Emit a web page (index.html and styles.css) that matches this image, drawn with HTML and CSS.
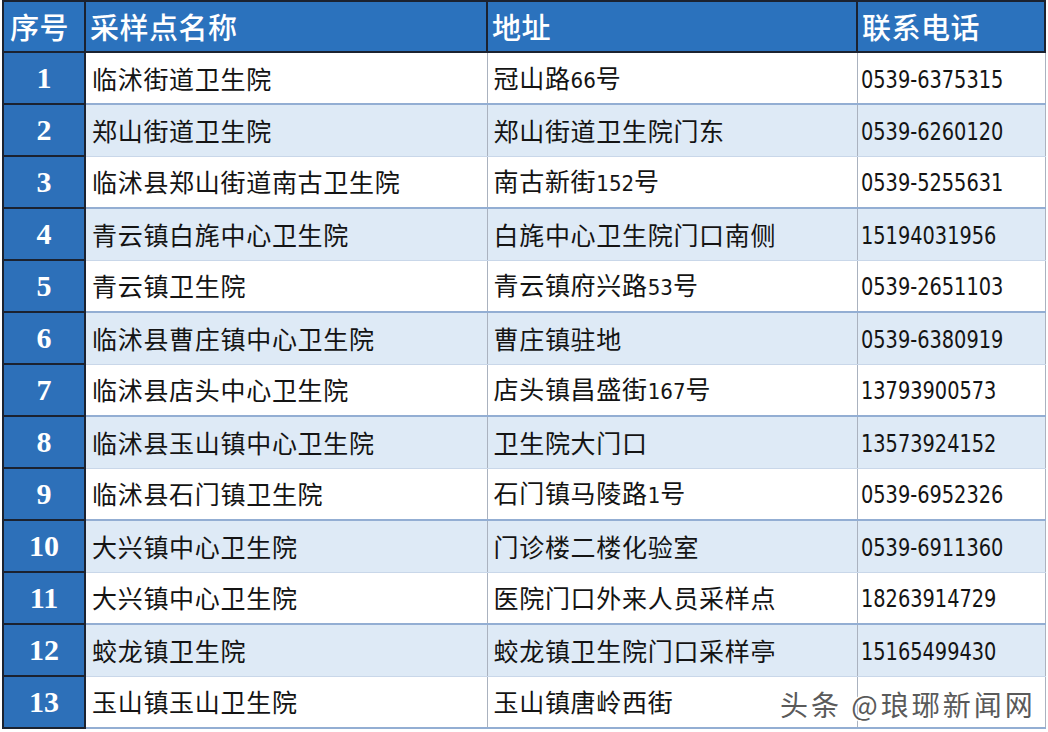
FILE: index.html
```html
<!DOCTYPE html>
<html lang="zh-CN">
<head>
<meta charset="utf-8">
<title>采样点</title>
<link rel="stylesheet" href="styles.css">
</head>
<body>
<div class="page">
<table class="sheet">
  <colgroup>
    <col class="c-no"><col class="c-name"><col class="c-addr"><col class="c-tel">
  </colgroup>
  <thead>
    <tr><th class="no">序号</th><th>采样点名称</th><th>地址</th><th>联系电话</th></tr>
  </thead>
  <tbody>
    <tr class="odd"><td class="no">1</td><td>临沭街道卫生院</td><td>冠山路<span class="num">66</span>号</td><td class="tel"><span class="digits">0539-6375315</span></td></tr>
    <tr class="even"><td class="no">2</td><td>郑山街道卫生院</td><td>郑山街道卫生院门东</td><td class="tel"><span class="digits">0539-6260120</span></td></tr>
    <tr class="odd"><td class="no">3</td><td>临沭县郑山街道南古卫生院</td><td>南古新街<span class="num">152</span>号</td><td class="tel"><span class="digits">0539-5255631</span></td></tr>
    <tr class="even"><td class="no">4</td><td>青云镇白旄中心卫生院</td><td>白旄中心卫生院门口南侧</td><td class="tel"><span class="digits">15194031956</span></td></tr>
    <tr class="odd"><td class="no">5</td><td>青云镇卫生院</td><td>青云镇府兴路<span class="num">53</span>号</td><td class="tel"><span class="digits">0539-2651103</span></td></tr>
    <tr class="even"><td class="no">6</td><td>临沭县曹庄镇中心卫生院</td><td>曹庄镇驻地</td><td class="tel"><span class="digits">0539-6380919</span></td></tr>
    <tr class="odd"><td class="no">7</td><td>临沭县店头中心卫生院</td><td>店头镇昌盛街<span class="num">167</span>号</td><td class="tel"><span class="digits">13793900573</span></td></tr>
    <tr class="even"><td class="no">8</td><td>临沭县玉山镇中心卫生院</td><td>卫生院大门口</td><td class="tel"><span class="digits">13573924152</span></td></tr>
    <tr class="odd"><td class="no">9</td><td>临沭县石门镇卫生院</td><td>石门镇马陵路<span class="num">1</span>号</td><td class="tel"><span class="digits">0539-6952326</span></td></tr>
    <tr class="even"><td class="no">10</td><td>大兴镇中心卫生院</td><td>门诊楼二楼化验室</td><td class="tel"><span class="digits">0539-6911360</span></td></tr>
    <tr class="odd"><td class="no">11</td><td>大兴镇中心卫生院</td><td>医院门口外来人员采样点</td><td class="tel"><span class="digits">18263914729</span></td></tr>
    <tr class="even"><td class="no">12</td><td>蛟龙镇卫生院</td><td>蛟龙镇卫生院门口采样亭</td><td class="tel"><span class="digits">15165499430</span></td></tr>
    <tr class="odd"><td class="no">13</td><td>玉山镇玉山卫生院</td><td>玉山镇唐岭西街</td><td class="tel">&nbsp;</td></tr>
  </tbody>
</table>
<div class="watermark">头条 @琅琊新闻网</div>
</div>
</body>
</html>
```

FILE: styles.css
```css
html, body {
  margin: 0;
  padding: 0;
  background: #ffffff;
}
.page {
  position: relative;
  width: 1048px;
  height: 732px;
  overflow: hidden;
  font-family: "Noto Sans CJK SC", "Noto Sans", sans-serif;
}
.sheet {
  border-collapse: collapse;
  table-layout: fixed;
  width: 1042px;
  margin-left: 2px;
}
.c-no { width: 82px; }
.c-name { width: 402px; }
.c-addr { width: 370px; }
.c-tel { width: 188px; }

.sheet th {
  height: 49px;
  padding: 0 0 0 4px;
  background: #2b72bd;
  color: #ffffff;
  font-size: 29px;
  font-weight: 500;
  text-align: left;
  border: 2px solid #1b2230;
  letter-spacing: 0.5px;
  line-height: 1;
}
.sheet th.no {
  padding: 0 0 0 6px;
}
.sheet td {
  height: 50px;
  padding: 0 0 0 6px;
  font-size: 25px;
  letter-spacing: 0.7px;
  color: #141414;
  line-height: 1;
  border-left: 1px solid #aab2bf;
  border-right: 1px solid #aab2bf;
  white-space: nowrap;
}
.sheet tr.odd td { background: #ffffff; border-bottom: 2px solid #93aed3; }
.sheet tr.even td { background: #deeaf6; border-bottom: 1px solid #c9d7e9; }

.sheet td.no {
  background: #2d70b9 !important;
  color: #ffffff;
  font-family: "Liberation Serif", serif;
  font-weight: 700;
  font-size: 30px;
  text-align: center;
  padding: 0;
  letter-spacing: 0;
  border: 2px solid #1b2230 !important;
}
.sheet td.tel {
  padding-left: 3px;
  letter-spacing: 0;
}
.digits {
  display: inline-block;
  font-family: "DejaVu Sans Condensed", "DejaVu Sans", sans-serif;
  font-stretch: condensed;
  font-size: 25px;
  letter-spacing: 0;
  transform: scaleX(0.86);
  transform-origin: left center;
}
.num {
  font-family: "DejaVu Sans Condensed", "DejaVu Sans", sans-serif;
  font-stretch: condensed;
  font-size: 22px;
  letter-spacing: 0;
}
.watermark {
  position: absolute;
  left: 780px;
  top: 684px;
  font-size: 28px;
  color: #5a5a5a;
  letter-spacing: 3px;
  text-shadow: -1px -1px 0 #fff, 1px -1px 0 #fff, -1px 1px 0 #fff, 1px 1px 0 #fff, 0 0 3px #fff;
}
```
